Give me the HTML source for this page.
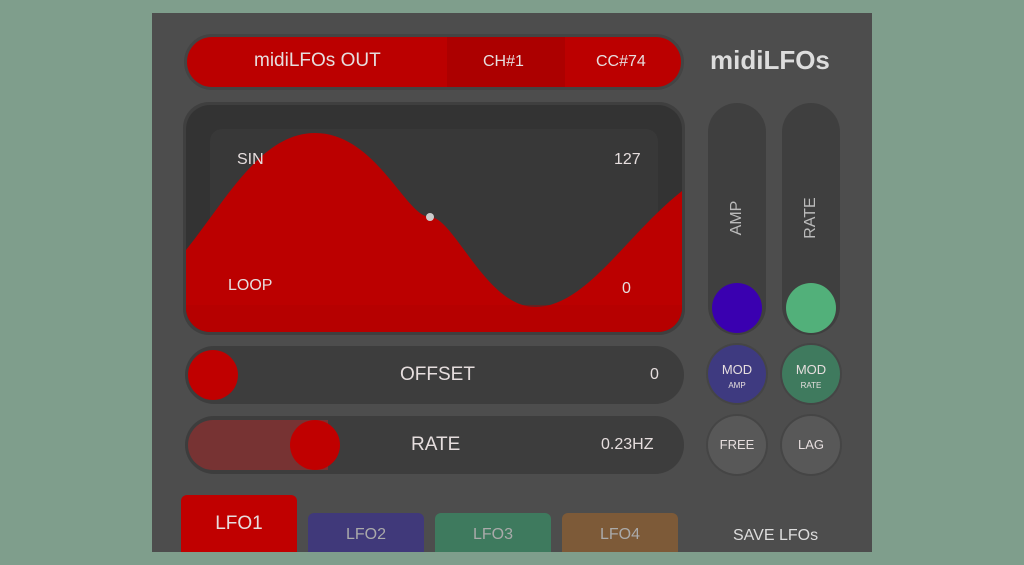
<!DOCTYPE html>
<html><head><style>
body{margin:0;width:1024px;height:565px;background:#7f9e8c;position:relative;overflow:hidden;font-family:"Liberation Sans",sans-serif;}
.a{position:absolute;}
.t{position:absolute;color:#e6dede;white-space:nowrap;}
</style></head><body>
<div class="a" style="left:152px;top:13px;width:720px;height:539px;background:#4d4d4d"></div>
<!-- top bar -->
<div class="a" style="left:184px;top:34px;width:500px;height:56px;border-radius:28px;background:#444"></div>
<div class="a" style="left:187px;top:37px;width:494px;height:50px;border-radius:25px;background:#bb0000;overflow:hidden">
 <div class="a" style="left:260px;top:0;width:118px;height:50px;background:#ac0000"></div>
</div>
<div class="t" style="left:254px;top:50px;font-size:19px">midiLFOs OUT</div>
<div class="t" style="left:483px;top:53px;font-size:16px">CH#1</div>
<div class="t" style="left:596px;top:53px;font-size:16px">CC#74</div>
<div class="t" style="left:710px;top:45px;font-size:26px;font-weight:bold;color:#ddd">midiLFOs</div>
<!-- display -->
<div class="a" style="left:183px;top:102px;width:502px;height:233px;border-radius:26px;background:#3f3f3f"></div>
<svg class="a" style="left:186px;top:105px" width="496" height="227">
 <defs><clipPath id="c"><rect x="0" y="0" width="496" height="227" rx="24"/></clipPath></defs>
 <g clip-path="url(#c)">
 <rect width="496" height="227" fill="#333"/>
 <rect x="24" y="24" width="448" height="180" rx="12" fill="#383838"/>
 <path d="M0 145 C40 95 75 28 129 28 C190 28 220 112 244 112 C268 112 300 202 349 202 C400 202 440 130 496 86 L496 227 L0 227 Z" fill="#bb0000"/>
 <rect x="0" y="200" width="496" height="27" fill="#b00000" opacity="0.4"/>
 </g>
 <circle cx="244" cy="112" r="4" fill="#ccc"/>
</svg>
<div class="t" style="left:237px;top:151px;font-size:16px">SIN</div>
<div class="t" style="left:614px;top:151px;font-size:16px">127</div>
<div class="t" style="left:228px;top:277px;font-size:16px">LOOP</div>
<div class="t" style="left:622px;top:280px;font-size:16px">0</div>
<!-- sliders -->
<div class="a" style="left:185px;top:346px;width:499px;height:58px;border-radius:29px;background:#3d3d3d"></div>
<div class="a" style="left:188px;top:350px;width:50px;height:50px;border-radius:50%;background:#c00000"></div>
<div class="t" style="left:400px;top:364px;font-size:19px">OFFSET</div>
<div class="t" style="left:650px;top:366px;font-size:16px">0</div>
<div class="a" style="left:185px;top:416px;width:499px;height:58px;border-radius:29px;background:#3d3d3d"></div>
<div class="a" style="left:188px;top:420px;width:140px;height:50px;border-radius:25px 0 0 25px;background:#773333"></div>
<div class="a" style="left:290px;top:420px;width:50px;height:50px;border-radius:50%;background:#c00000"></div>
<div class="t" style="left:411px;top:434px;font-size:19px">RATE</div>
<div class="t" style="left:601px;top:436px;font-size:16px">0.23HZ</div>
<!-- vertical sliders -->
<div class="a" style="left:708px;top:103px;width:58px;height:232px;border-radius:29px;background:#3f3f3f"></div>
<div class="a" style="left:782px;top:103px;width:58px;height:232px;border-radius:29px;background:#3f3f3f"></div>
<div class="t" style="left:687px;top:209px;width:100px;text-align:center;font-size:16px;transform:rotate(-90deg);color:#bbb">AMP</div>
<div class="t" style="left:761px;top:209px;width:100px;text-align:center;font-size:16px;transform:rotate(-90deg);color:#bbb">RATE</div>
<div class="a" style="left:712px;top:283px;width:50px;height:50px;border-radius:50%;background:#3a00b0"></div>
<div class="a" style="left:786px;top:283px;width:50px;height:50px;border-radius:50%;background:#52b07a"></div>
<!-- round buttons -->
<div class="a" style="left:708px;top:345px;width:58px;height:58px;border-radius:50%;background:#3e3a80;box-shadow:0 0 0 2px #454545"></div>
<div class="a" style="left:782px;top:345px;width:58px;height:58px;border-radius:50%;background:#3f7a5e;box-shadow:0 0 0 2px #454545"></div>
<div class="t" style="left:708px;top:363px;width:58px;text-align:center;font-size:13px;line-height:14px">MOD<br><span style="font-size:8px">AMP</span></div>
<div class="t" style="left:782px;top:363px;width:58px;text-align:center;font-size:13px;line-height:14px">MOD<br><span style="font-size:8px">RATE</span></div>
<div class="a" style="left:708px;top:416px;width:58px;height:58px;border-radius:50%;background:#585858;box-shadow:0 0 0 2px #454545"></div>
<div class="a" style="left:782px;top:416px;width:58px;height:58px;border-radius:50%;background:#585858;box-shadow:0 0 0 2px #454545"></div>
<div class="t" style="left:708px;top:437px;width:58px;text-align:center;font-size:13px">FREE</div>
<div class="t" style="left:782px;top:437px;width:58px;text-align:center;font-size:13px">LAG</div>
<!-- tabs -->
<div class="a" style="left:181px;top:495px;width:116px;height:57px;border-radius:6px 6px 0 0;background:#c00000"></div>
<div class="t" style="left:181px;top:513px;width:116px;text-align:center;font-size:19px">LFO1</div>
<div class="a" style="left:308px;top:513px;width:116px;height:39px;border-radius:6px 6px 0 0;background:#40397a"></div>
<div class="t" style="left:308px;top:526px;width:116px;text-align:center;font-size:16px;color:#aaa">LFO2</div>
<div class="a" style="left:435px;top:513px;width:116px;height:39px;border-radius:6px 6px 0 0;background:#3e7a5e"></div>
<div class="t" style="left:435px;top:526px;width:116px;text-align:center;font-size:16px;color:#aaa">LFO3</div>
<div class="a" style="left:562px;top:513px;width:116px;height:39px;border-radius:6px 6px 0 0;background:#7d5a38"></div>
<div class="t" style="left:562px;top:526px;width:116px;text-align:center;font-size:16px;color:#aaa">LFO4</div>
<div class="t" style="left:733px;top:527px;font-size:16px;color:#ddd">SAVE LFOs</div>
</body></html>
